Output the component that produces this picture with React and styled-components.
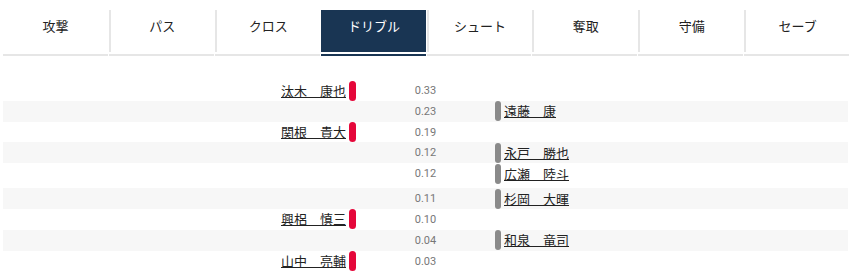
import React from 'react';
import styled, { createGlobalStyle } from 'styled-components';

const Global = createGlobalStyle`
  html, body { margin: 0; padding: 0; background: #fff; }
  body { font-family: Roboto, "Noto Sans CJK JP", sans-serif; color: #222; }
  * { box-sizing: border-box; }
`;

const NAVY = '#193553';

const Page = styled.div`
  padding: 10px 4px 0 3px;
`;

const TabBar = styled.nav`
  display: flex;
  gap: 1px;
`;

const Tab = styled.div`
  flex: 1;
  display: flex;
  flex-direction: column;
  cursor: pointer;
`;

const TabLabel = styled.div`
  height: 42px;
  padding-top: 6px;
  line-height: 20px;
  font-size: 13px;
  text-align: center;
  font-family: "Noto Sans CJK JP", sans-serif;
  background: ${(p) => (p.$active ? NAVY : '#fff')};
  color: ${(p) => (p.$active ? '#fff' : '#222')};
  border-left: ${(p) => (p.$first ? 'none' : `2px solid ${p.$active ? NAVY : '#e6e6e6'}`)};
`;

const TabLine = styled.div`
  height: 2px;
  margin-top: 2px;
  background: ${(p) => (p.$active ? NAVY : '#e6e6e6')};
`;

const List = styled.div`
  margin-top: 24px;
  margin-right: 1px;
`;

const Row = styled.div`
  display: grid;
  grid-template-columns: 1fr 139px 1fr;
  height: ${(p) => 20.8 + (p.$extra || 0)}px;
  padding-bottom: ${(p) => p.$extra || 0}px;
  background: ${(p) => (p.$shade ? '#f7f7f7' : '#fff')};
`;

const Side = styled.div`
  display: flex;
  align-items: center;
  gap: 3px;
  justify-content: ${(p) => (p.$left ? 'flex-end' : 'flex-start')};
`;

const Bar = styled.span`
  display: block;
  width: ${(p) => (p.$home ? 7 : 6)}px;
  height: 20px;
  border-radius: 4px;
  background: ${(p) => (p.$home ? '#e5073a' : '#8a8a8a')};
`;

const Name = styled.a`
  font-family: "Noto Sans CJK JP", sans-serif;
  font-size: 13px;
  line-height: 20px;
  color: #222;
  text-decoration: underline;
  text-underline-offset: 1px;
`;

const Value = styled.div`
  text-align: center;
  font-size: 11px;
  line-height: 21px;
  color: #777;
`;

const tabs = ['攻撃', 'パス', 'クロス', 'ドリブル', 'シュート', '奪取', '守備', 'セーブ'];

const rows = [
  { side: 'L', name: '汰木　康也', v: '0.33' },
  { side: 'R', name: '遠藤　康', v: '0.23' },
  { side: 'L', name: '関根　貴大', v: '0.19' },
  { side: 'R', name: '永戸　勝也', v: '0.12' },
  { side: 'R', name: '広瀬　陸斗', v: '0.12', extra: 4.2 },
  { side: 'R', name: '杉岡　大暉', v: '0.11' },
  { side: 'L', name: '興梠　慎三', v: '0.10' },
  { side: 'R', name: '和泉　竜司', v: '0.04' },
  { side: 'L', name: '山中　亮輔', v: '0.03' },
];

export default function App() {
  return (
    <>
      <Global />
      <Page>
        <TabBar>
          {tabs.map((t, i) => (
            <Tab key={t}>
              <TabLabel $first={i === 0} $active={i === 3}>{t}</TabLabel>
              <TabLine $active={i === 3} />
            </Tab>
          ))}
        </TabBar>
        <List>
          {rows.map((r, i) => (
            <Row key={i} $shade={i % 2 === 1} $extra={r.extra}>
              <Side $left>
                {r.side === 'L' && (
                  <>
                    <Name href="#">{r.name}</Name>
                    <Bar $home />
                  </>
                )}
              </Side>
              <Value>{r.v}</Value>
              <Side>
                {r.side === 'R' && (
                  <>
                    <Bar />
                    <Name href="#">{r.name}</Name>
                  </>
                )}
              </Side>
            </Row>
          ))}
        </List>
      </Page>
    </>
  );
}
